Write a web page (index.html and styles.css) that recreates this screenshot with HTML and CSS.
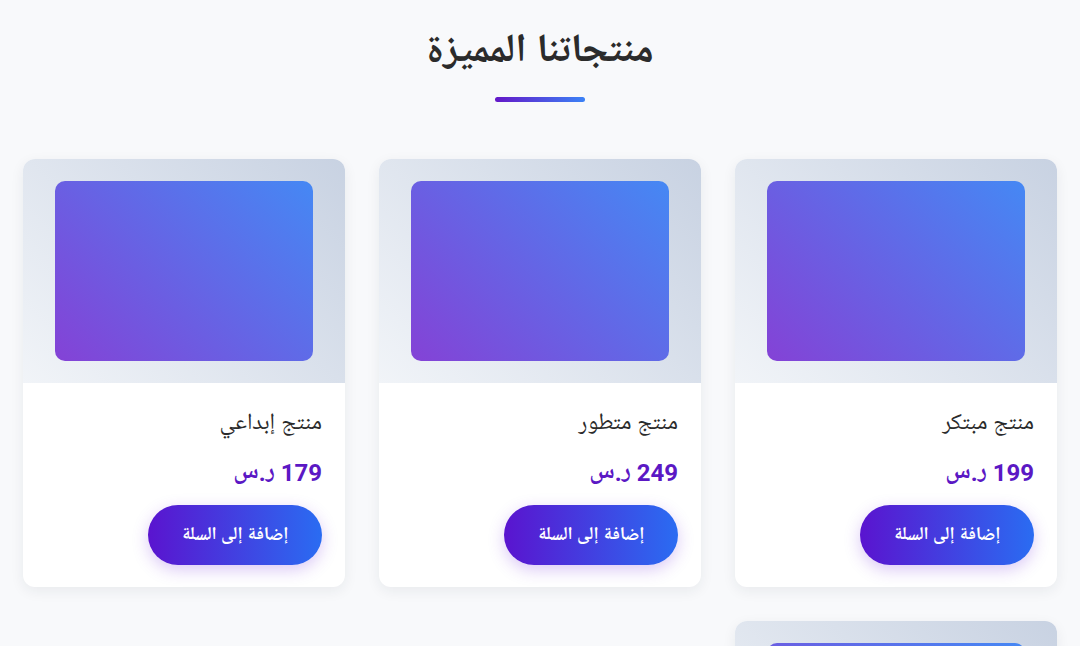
FILE: index.html
```html
<!DOCTYPE html>
<html lang="ar" dir="rtl">
<head>
<meta charset="utf-8">
<title>منتجاتنا المميزة</title>
<link rel="stylesheet" href="styles.css">
</head>
<body>
<section class="products">
  <h2 class="section-title">منتجاتنا المميزة</h2>
  <div class="title-bar"></div>
  <div class="grid">
    <div class="card">
      <div class="card-media"><div class="media-inner"></div></div>
      <div class="card-body">
        <h3 class="card-title">منتج مبتكر</h3>
        <div class="price">199 ر.س</div>
        <button class="add-btn">إضافة إلى السلة</button>
      </div>
    </div>
    <div class="card">
      <div class="card-media"><div class="media-inner"></div></div>
      <div class="card-body">
        <h3 class="card-title">منتج متطور</h3>
        <div class="price">249 ر.س</div>
        <button class="add-btn">إضافة إلى السلة</button>
      </div>
    </div>
    <div class="card">
      <div class="card-media"><div class="media-inner"></div></div>
      <div class="card-body">
        <h3 class="card-title">منتج إبداعي</h3>
        <div class="price">179 ر.س</div>
        <button class="add-btn">إضافة إلى السلة</button>
      </div>
    </div>
    <div class="card">
      <div class="card-media"><div class="media-inner"></div></div>
      <div class="card-body">
        <h3 class="card-title">منتج عصري</h3>
        <div class="price">299 ر.س</div>
        <button class="add-btn">إضافة إلى السلة</button>
      </div>
    </div>
  </div>
</section>
</body>
</html>
```
FILE: styles.css
```css
* { box-sizing: border-box; }
html, body { margin: 0; padding: 0; }
body {
  background: #f8f9fb;
  font-family: Roboto, "Noto Naskh Arabic UI", "Noto Naskh Arabic", "Noto Sans Arabic UI", "Noto Sans Arabic", sans-serif;
  color: #2b2b2b;
}
.products {
  padding: 26px 23px 40px;
}
.section-title {
  margin: 0;
  text-align: center;
  font-size: 40px;
  line-height: 56px;
  font-weight: 700;
  color: #2b2b2b;
}
.title-bar {
  width: 90px;
  height: 5px;
  margin: 15px auto 0;
  border-radius: 3px;
  background: linear-gradient(90deg, #6418c8, #3b82f6);
}
.grid {
  margin-top: 57px;
  display: grid;
  grid-template-columns: repeat(3, 1fr);
  gap: 34px;
}
.card {
  background: #fff;
  border-radius: 12px;
  overflow: hidden;
  box-shadow: 0 4px 14px rgba(30, 41, 59, 0.07);
}
.card-media {
  height: 224px;
  display: flex;
  align-items: center;
  justify-content: center;
  background: linear-gradient(45deg, #f1f4f8, #c8d2e2);
}
.media-inner {
  width: 80%;
  height: 80%;
  border-radius: 10px;
  background: linear-gradient(45deg, #8442d6, #4588f4);
}
.card-body {
  padding: 22px 23px 22px;
  text-align: right;
}
.card-title {
  margin: 0;
  font-size: 23px;
  line-height: 40px;
  font-weight: 400;
  color: #2b2b2b;
}
.price {
  margin-top: 11px;
  font-size: 24px;
  line-height: 34px;
  font-weight: 700;
  color: #5b18c4;
}
.add-btn {
  margin-top: 15px;
  width: 174px;
  height: 60px;
  border: none;
  border-radius: 30px;
  background: linear-gradient(90deg, #5a14cf, #2a6cf2);
  color: #fff;
  font-family: inherit;
  font-size: 18px;
  font-weight: 700;
  box-shadow: 0 5px 16px rgba(110, 40, 220, 0.25);
  cursor: pointer;
}
```
